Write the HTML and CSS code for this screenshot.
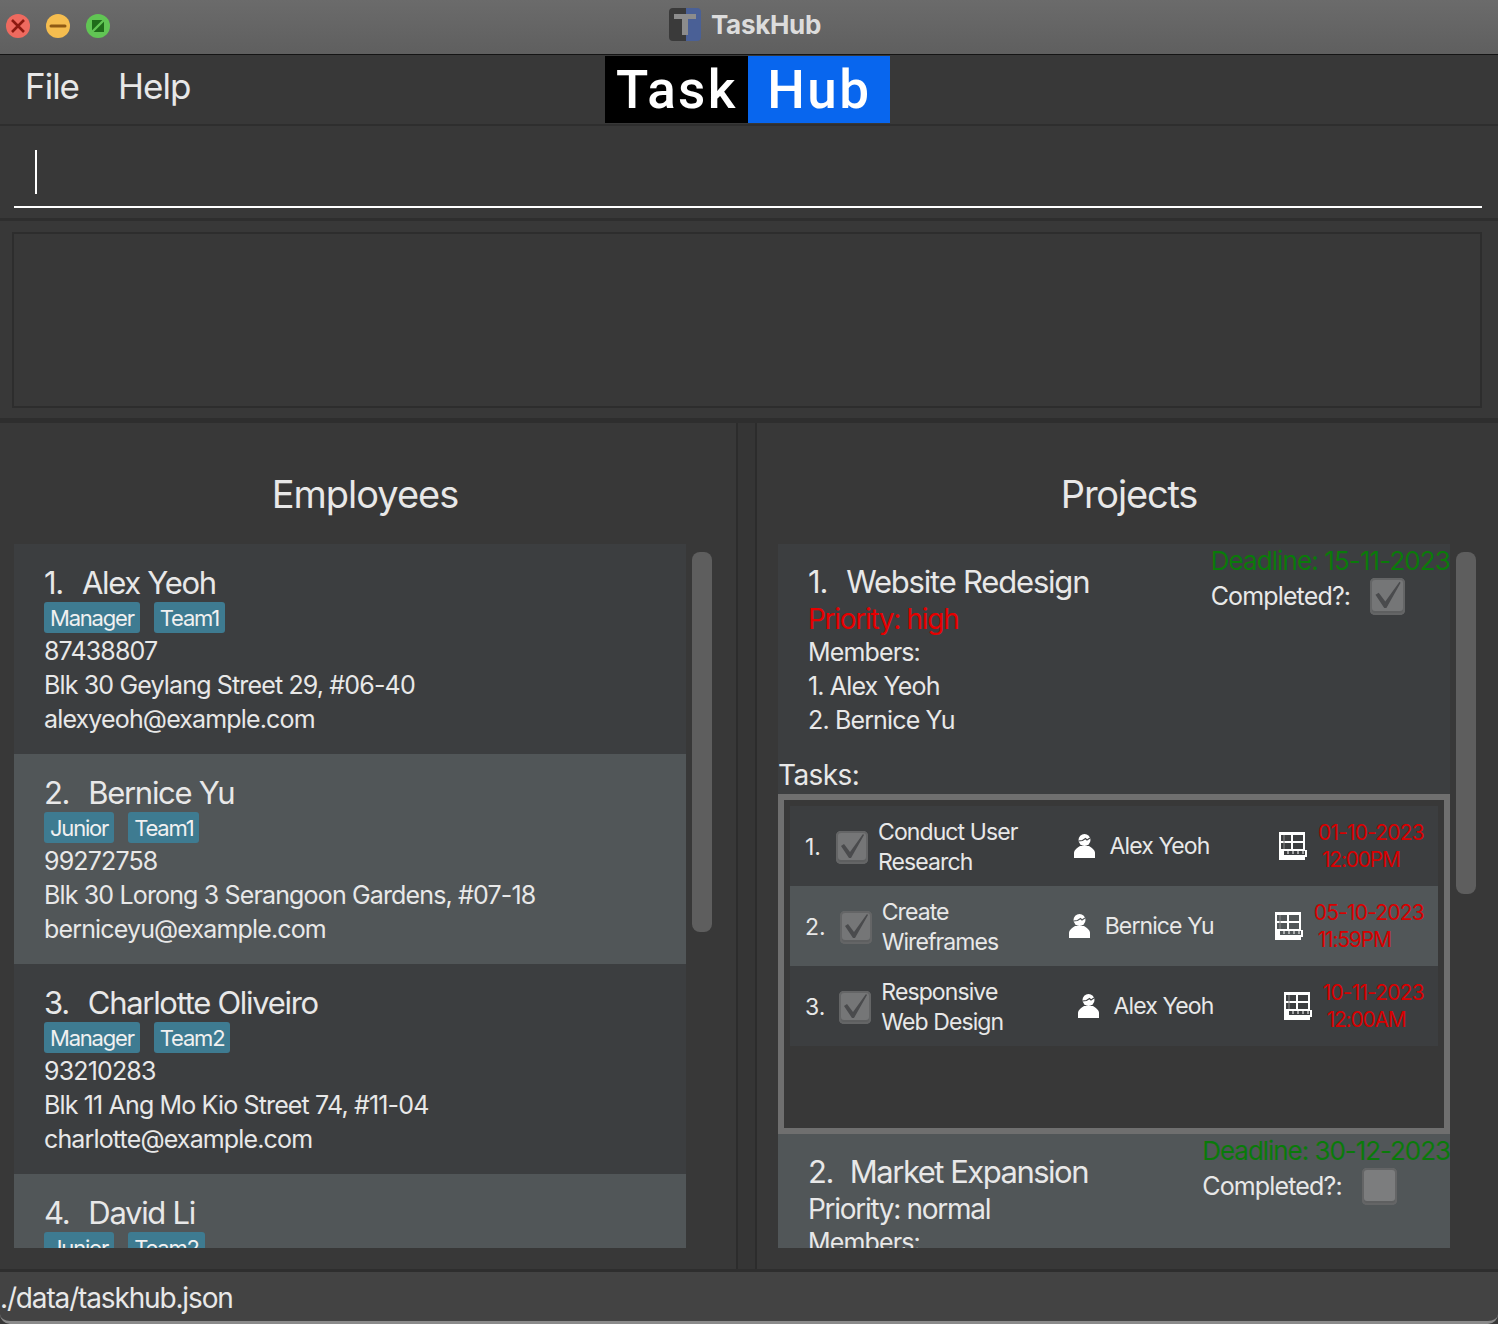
FILE: index.html
```html
<!DOCTYPE html>
<html lang="en">
<head>
    <meta charset="UTF-8" />
    <title>TaskHub</title>
    <link rel="stylesheet" href="styles.css">
</head>
<body>
    <div class="titlebar">
        <div class="lights">
            <svg class="light" viewBox="0 0 24 24"><circle cx="12" cy="12" r="12" fill="#ee6a5f"/><path d="M6 6l12 12M18 6L6 18" stroke="#8c1a10" stroke-width="2.6" fill="none"/></svg>
            <svg class="light" viewBox="0 0 24 24"><circle cx="12" cy="12" r="12" fill="#f5bd4f"/><path d="M5 12h14" stroke="#8f5a14" stroke-width="3" stroke-linecap="round"/></svg>
            <svg class="light" viewBox="0 0 24 24"><circle cx="12" cy="12" r="12" fill="#61c554"/><path d="M6 6h12v12H6z" fill="#1f6b1a"/><path d="M5 19L19 5" stroke="#61c554" stroke-width="2.4"/></svg>
        </div>
        <div class="window-title">
            <svg class="app-icon" viewBox="0 0 32 33"><rect width="20" height="33" rx="4" fill="#3a3a3a"/><rect x="12" width="20" height="33" rx="4" fill="#4a6096"/><rect x="12" width="5" height="33" fill="#3a3a3a"/><path d="M5 6h22v5h-8v16h-6V11H5z" fill="#8c8c8c"/></svg>
            <span>TaskHub</span>
        </div>
    </div>

    <div class="menubar">
        <span class="menu-item">File</span>
        <span class="menu-item">Help</span>
        <div class="logo">
            <span class="logo-task">Task</span>
            <span class="logo-hub">Hub</span>
        </div>
    </div>

    <div class="command-box">
        <div class="command-input"><span class="caret"></span></div>
    </div>

    <div class="result-area">
        <div class="result-box"></div>
    </div>

    <div class="main">
        <section class="panel">
            <h2 class="panel-title panel-title-left">Employees</h2>
            <div class="list-row">
                <div class="list">
                    <div class="person">
                        <div class="person-name"><span class="num">1.</span>Alex Yeoh</div>
                        <div class="tags"><span class="tag">Manager</span><span class="tag">Team1</span></div>
                        <div class="line">87438807</div>
                        <div class="line">Blk 30 Geylang Street 29, #06-40</div>
                        <div class="line">alexyeoh@example.com</div>
                    </div>
                    <div class="person even">
                        <div class="person-name"><span class="num">2.</span>Bernice Yu</div>
                        <div class="tags"><span class="tag">Junior</span><span class="tag">Team1</span></div>
                        <div class="line">99272758</div>
                        <div class="line">Blk 30 Lorong 3 Serangoon Gardens, #07-18</div>
                        <div class="line">berniceyu@example.com</div>
                    </div>
                    <div class="person">
                        <div class="person-name"><span class="num">3.</span>Charlotte Oliveiro</div>
                        <div class="tags"><span class="tag">Manager</span><span class="tag">Team2</span></div>
                        <div class="line">93210283</div>
                        <div class="line">Blk 11 Ang Mo Kio Street 74, #11-04</div>
                        <div class="line">charlotte@example.com</div>
                    </div>
                    <div class="person even">
                        <div class="person-name"><span class="num">4.</span>David Li</div>
                        <div class="tags"><span class="tag">Junior</span><span class="tag">Team2</span></div>
                    </div>
                </div>
                <div class="scroll-track"><div class="scroll-thumb thumb-people"></div></div>
            </div>
        </section>

        <div class="gutter"></div>

        <section class="panel">
            <h2 class="panel-title panel-title-right">Projects</h2>
            <div class="list-row list-row-projects">
                <div class="list">
                    <div class="project">
                        <div class="project-head">
                            <div class="project-info">
                                <div class="project-name"><span class="num">1.</span>Website Redesign</div>
                                <div class="priority high">Priority: high</div>
                                <div class="line">Members:</div>
                                <div class="line">1. Alex Yeoh</div>
                                <div class="line">2. Bernice Yu</div>
                            </div>
                            <div class="project-side">
                                <div class="deadline">Deadline: 15-11-2023</div>
                                <div class="completed">
                                    <span>Completed?:</span>
                                    <span class="check check-big">
                                        <svg viewBox="0 0 32 33"><path d="M5 15l3-2 6 8L27 3l1 1-13 23h-2z" fill="#4a4b4d"/></svg>
                                    </span>
                                </div>
                            </div>
                        </div>
                        <div class="tasks-label">Tasks:</div>
                        <div class="tasks">
                            <div class="task">
                                <div class="task-main">
                                    <span class="task-num">1.</span>
                                    <span class="check"><svg viewBox="0 0 32 33"><path d="M5 15l3-2 6 8L27 3l1 1-13 23h-2z" fill="#4a4b4d"/></svg></span>
                                    <span class="task-name">Conduct User Research</span>
                                </div>
                                <div class="task-person">
                                    <svg class="icon-person" viewBox="0 0 21 24"><circle cx="10.500" cy="6" r="6" fill="#fff"/><path class="icon-cut" d="M4.500 7l4-.5 3-2 1.500 1.500 3-2"/><path d="M0 24v-5c0-3 3-5 6-7h9c3 2 6 4 6 7v5z" fill="#fff"/></svg>
                                    <span>Alex Yeoh</span>
                                </div>
                                <div class="task-date">
                                    <svg class="icon-cal" viewBox="0 0 28 28"><path d="M0 0h26v28H0z" fill="#fff"/><path class="icon-fill" d="M2 3h22v14H2z"/><path d="M13 3v14M2 10h22" stroke="#fff" stroke-width="2"/><path d="M5 3v14" stroke="#8a8a8a"/><path d="M3 18h25v7H3z" fill="#fff"/><path class="icon-fill" d="M5 19h21v4H5z"/><path d="M9 19v3M14 19v3M19 19v3M24 19v3" stroke="#fff"/></svg>
                                    <div class="date-text"><div>01-10-2023</div><div class="date-time">12:00PM</div></div>
                                </div>
                            </div>
                            <div class="task even">
                                <div class="task-main">
                                    <span class="task-num">2.</span>
                                    <span class="check"><svg viewBox="0 0 32 33"><path d="M5 15l3-2 6 8L27 3l1 1-13 23h-2z" fill="#4a4b4d"/></svg></span>
                                    <span class="task-name">Create Wireframes</span>
                                </div>
                                <div class="task-person">
                                    <svg class="icon-person" viewBox="0 0 21 24"><circle cx="10.500" cy="6" r="6" fill="#fff"/><path class="icon-cut" d="M4.500 7l4-.5 3-2 1.500 1.500 3-2"/><path d="M0 24v-5c0-3 3-5 6-7h9c3 2 6 4 6 7v5z" fill="#fff"/></svg>
                                    <span>Bernice Yu</span>
                                </div>
                                <div class="task-date">
                                    <svg class="icon-cal" viewBox="0 0 28 28"><path d="M0 0h26v28H0z" fill="#fff"/><path class="icon-fill" d="M2 3h22v14H2z"/><path d="M13 3v14M2 10h22" stroke="#fff" stroke-width="2"/><path d="M5 3v14" stroke="#8a8a8a"/><path d="M3 18h25v7H3z" fill="#fff"/><path class="icon-fill" d="M5 19h21v4H5z"/><path d="M9 19v3M14 19v3M19 19v3M24 19v3" stroke="#fff"/></svg>
                                    <div class="date-text"><div>05-10-2023</div><div class="date-time">11:59PM</div></div>
                                </div>
                            </div>
                            <div class="task">
                                <div class="task-main">
                                    <span class="task-num">3.</span>
                                    <span class="check"><svg viewBox="0 0 32 33"><path d="M5 15l3-2 6 8L27 3l1 1-13 23h-2z" fill="#4a4b4d"/></svg></span>
                                    <span class="task-name">Responsive Web Design</span>
                                </div>
                                <div class="task-person">
                                    <svg class="icon-person" viewBox="0 0 21 24"><circle cx="10.500" cy="6" r="6" fill="#fff"/><path class="icon-cut" d="M4.500 7l4-.5 3-2 1.500 1.500 3-2"/><path d="M0 24v-5c0-3 3-5 6-7h9c3 2 6 4 6 7v5z" fill="#fff"/></svg>
                                    <span>Alex Yeoh</span>
                                </div>
                                <div class="task-date">
                                    <svg class="icon-cal" viewBox="0 0 28 28"><path d="M0 0h26v28H0z" fill="#fff"/><path class="icon-fill" d="M2 3h22v14H2z"/><path d="M13 3v14M2 10h22" stroke="#fff" stroke-width="2"/><path d="M5 3v14" stroke="#8a8a8a"/><path d="M3 18h25v7H3z" fill="#fff"/><path class="icon-fill" d="M5 19h21v4H5z"/><path d="M9 19v3M14 19v3M19 19v3M24 19v3" stroke="#fff"/></svg>
                                    <div class="date-text"><div>10-11-2023</div><div class="date-time">12:00AM</div></div>
                                </div>
                            </div>
                        </div>
                    </div>
                    <div class="project even project-two">
                        <div class="project-head">
                            <div class="project-info">
                                <div class="project-name"><span class="num num-wide">2.</span>Market Expansion</div>
                                <div class="priority">Priority: normal</div>
                                <div class="line">Members:</div>
                            </div>
                            <div class="project-side">
                                <div class="deadline">Deadline: 30-12-2023</div>
                                <div class="completed">
                                    <span>Completed?:</span>
                                    <span class="check check-big check-empty"></span>
                                </div>
                            </div>
                        </div>
                    </div>
                </div>
                <div class="scroll-track"><div class="scroll-thumb thumb-projects"></div></div>
            </div>
        </section>
    </div>

    <div class="statusbar">./data/taskhub.json</div>
</body>
</html>
```

FILE: styles.css
```css
* {
    box-sizing: border-box;
}
html, body {
    margin: 0;
    padding: 0;
}
body {
    width: 1498px;
    height: 1324px;
    overflow: hidden;
    background-color: #383838;
    color: #e8e8e8;
    font-family: "Inter", "Liberation Sans", sans-serif;
    font-size: 25px;
    letter-spacing: -0.85px;
}

/* window chrome */
.titlebar {
    position: relative;
    height: 55px;
    background: linear-gradient(#6b6b6b, #5f5f5f);
    border-bottom: 1px solid #141414;
    display: flex;
    align-items: center;
    justify-content: center;
}
.lights {
    position: absolute;
    left: 6px;
    top: 14px;
    display: flex;
    gap: 16px;
}
.light {
    width: 24px;
    height: 24px;
}
.window-title {
    display: flex;
    align-items: center;
    gap: 10px;
    margin: -6px 8px 0 0;
    color: #dcdcdc;
    font-size: 26px;
    font-weight: 700;
    letter-spacing: -0.3px;
}
.app-icon {
    width: 32px;
    height: 33px;
}

.menubar {
    height: 71px;
    display: flex;
    align-items: center;
    padding-left: 25px;
    border-bottom: 2px solid #2e2e2e;
}
.menu-item {
    font-size: 35px;
    letter-spacing: -1px;
    margin: -8px 39px 0 0;
}
.logo {
    display: flex;
    height: 67px;
    margin-left: 376px;
    font-family: "Roboto", "Liberation Sans", sans-serif;
    font-size: 53px;
    font-weight: 500;
    letter-spacing: 2.4px;
    color: #fff;
}
.logo-task, .logo-hub {
    width: 143px;
    display: flex;
    align-items: center;
    justify-content: center;
}
.logo-task {
    background: #000;
}
.logo-hub {
    width: 142px;
    background: #0866ee;
}

.command-box {
    height: 95px;
    padding: 0 16px 0 14px;
    border-bottom: 3px solid #2e2e2e;
}
.command-input {
    height: 82px;
    padding: 24px 0 0 21px;
    border-bottom: 2px solid #fff;
}
.caret {
    display: block;
    width: 2px;
    height: 44px;
    background: #fff;
}

.result-area {
    height: 199px;
    padding: 11px 16px 10px 12px;
    border-bottom: 2px solid #2e2e2e;
}
.result-box {
    height: 100%;
    border: 2px solid #2d2d2d;
}

/* main panels */
.main {
    height: 852px;
    display: flex;
    border-top: 3px solid #2e2e2e;
    border-bottom: 3px solid #2e2e2e;
}
.panel {
    flex: 1;
    padding: 0;
    min-width: 0;
}
.panel:first-child {
    flex: 0 0 738px;
    border-right: 2px solid #2c2c2c;
}
.gutter {
    flex: 0 0 19px;
    background: #353535;
    border-right: 2px solid #2c2c2c;
}
.panel-title {
    height: 121px;
    margin: 0;
    padding-top: 47px;
    font-size: 38px;
    line-height: 48px;
    font-weight: 400;
    letter-spacing: -1px;
    text-align: center;
}
.panel-title-left {
    padding-right: 6px;
}
.panel-title-right {
    padding-left: 3px;
    letter-spacing: -1.2px;
}
.list-row {
    display: flex;
    height: 704px;
    padding-left: 14px;
}
.list-row-projects {
    padding-left: 21px;
}
.list {
    width: 672px;
    height: 704px;
    overflow: hidden;
    flex: none;
}
.scroll-track {
    width: 20px;
    margin-left: 6px;
    padding-top: 8px;
}
.scroll-thumb {
    width: 20px;
    background: #5e5e5e;
    border-radius: 8px;
}
.thumb-people {
    height: 380px;
}
.thumb-projects {
    height: 342px;
}

/* employee cards */
.person {
    height: 210px;
    padding: 20px 30px 0;
    background: #3c3e40;
    overflow: hidden;
}
.even {
    background: #515658;
}
.num {
    margin-right: 19px;
}
.person-name {
    font-size: 31px;
    line-height: 38px;
    letter-spacing: -1.3px;
}
.tags {
    display: flex;
    gap: 14px;
    margin: 0 0 1px;
}
.tag {
    height: 31px;
    padding: 0 6px;
    background: #3e7b91;
    border-radius: 3px;
    font-size: 22px;
    line-height: 33px;
    color: #f0f0f0;
    letter-spacing: -1.2px;
}
.line {
    height: 34px;
    line-height: 34px;
}

/* project cards */
.project {
    background: #3c3e40;
    height: 590px;
}
.project.even {
    background: #515658;
}
.project-two {
    height: 200px;
}
.project-head {
    display: flex;
    justify-content: space-between;
    height: 211px;
}
.project-two .project-head {
    height: auto;
}
.project-info {
    padding: 19px 0 0 30px;
}
.project-name {
    font-size: 31px;
    line-height: 38px;
    letter-spacing: -1.2px;
}
.num-wide {
    margin-right: 17px;
}
.project-two .project-name {
    letter-spacing: -1.5px;
}
.priority {
    margin-top: 1px;
    height: 33px;
    font-size: 28px;
    line-height: 35px;
    letter-spacing: -1.3px;
}
.high {
    color: #e60000;
}
.project-side {
    padding-top: 1px;
}
.deadline {
    color: #0a7a0a;
    font-size: 26px;
    line-height: 32px;
    letter-spacing: -0.9px;
    white-space: nowrap;
}
.project-two .deadline {
    letter-spacing: -1.05px;
}
.completed {
    display: flex;
    align-items: center;
    gap: 20px;
    height: 37px;
}

.check {
    flex: none;
    display: block;
    width: 32px;
    height: 33px;
    background: #757677;
    border-radius: 5px;
    box-shadow: inset 0 0 0 2px #646566, inset 0 -2px 0 2px #5e5f60;
}
.check svg {
    display: block;
    width: 100%;
    height: 100%;
}
.check-big {
    width: 35px;
    height: 37px;
    margin-top: 2px;
}
.check-empty {
    background: #7c7d7e;
}

.tasks-label {
    height: 39px;
    line-height: 40px;
    font-size: 28px;
    letter-spacing: -0.6px;
}
.tasks {
    height: 340px;
    padding: 6px;
    border: 6px solid #6f6f6f;
    background: #383838;
}
.task {
    height: 80px;
    padding: 0 14px 0 15px;
    display: flex;
    align-items: center;
    background: #3c3e40;
    font-size: 23px;
    letter-spacing: -0.9px;
}
.task.even {
    background: #515658;
}
.task-main {
    flex: 0 0 200px;
    display: flex;
    align-items: center;
    padding-top: 2px;
}
.task-num {
    min-width: 17px;
    margin-right: 14px;
    letter-spacing: 0;
}
.check + .task-name {
    margin-left: 10px;
}
.task-name {
    flex: 0 0 150px;
    line-height: 30px;
}
.task-person {
    flex: 1;
    display: flex;
    align-items: center;
    justify-content: center;
    gap: 15px;
    padding-right: 24px;
}
.icon-person {
    width: 21px;
    height: 24px;
}
.icon-cut {
    fill: none;
    stroke: #3c3e40;
    stroke-width: 1.2;
}
.even .icon-cut {
    stroke: #515658;
}
.task-date {
    display: flex;
    align-items: center;
    gap: 11px;
}
.icon-cal {
    width: 28px;
    height: 28px;
}
.icon-fill {
    fill: #3c3e40;
}
.even .icon-fill {
    fill: #515658;
}
.date-text {
    color: #d80000;
    font-size: 21px;
    line-height: 27px;
    letter-spacing: -0.8px;
}
.date-time {
    padding-left: 4px;
    letter-spacing: -1.2px;
}

.statusbar {
    height: 52px;
    background: #434343;
    border-bottom: 3px solid #8a8a8a;
    border-radius: 0 0 10px 10px;
    font-size: 28px;
    line-height: 52px;
    letter-spacing: -1.15px;
}
```
